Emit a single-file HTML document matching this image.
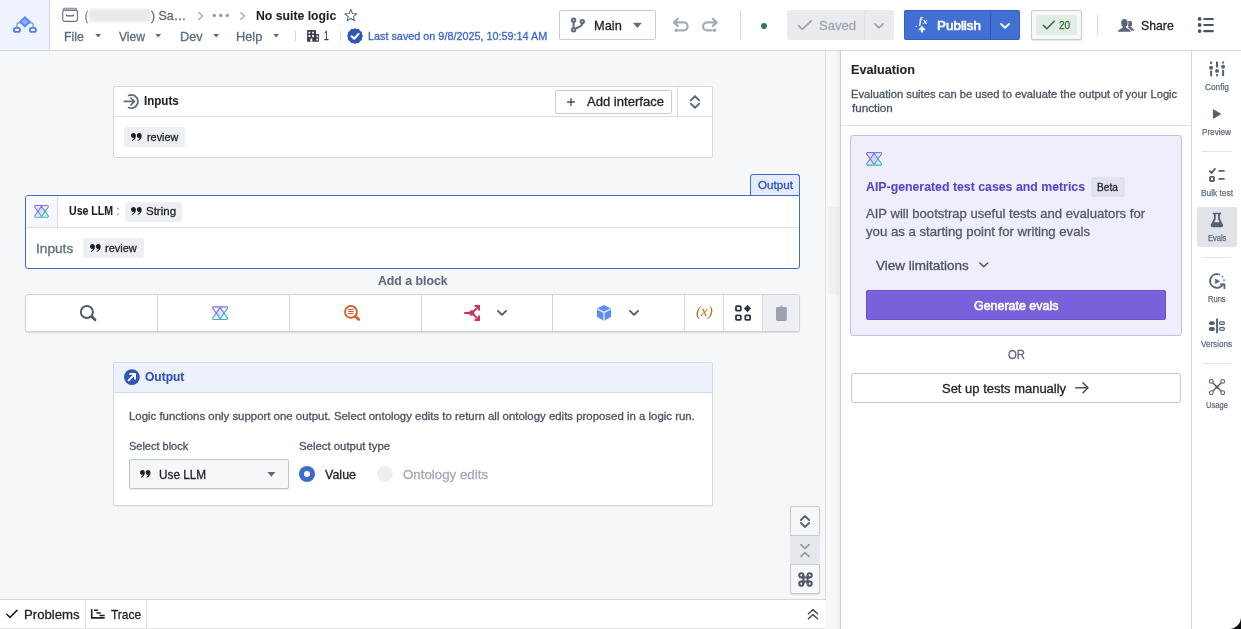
<!DOCTYPE html>
<html lang="en">
<head>
<meta charset="utf-8">
<title>No suite logic</title>
<style>
html,body{margin:0;padding:0}
body{width:1241px;height:629px;overflow:hidden;position:relative;background:#f6f7f9;font-family:"Liberation Sans",sans-serif;color:#1c2127}
div,svg.ic,span.t{position:absolute;box-sizing:border-box}
span.t{-webkit-text-stroke:.3px;white-space:nowrap;line-height:1;transform-origin:0 50%;display:block}
svg.ic{overflow:visible}
</style>
</head>
<body>
<div id="header" style="left:0;top:0;width:1241px;height:51px;background:#fff;border-bottom:1px solid #d3d8de">
<div style="left:0px;top:0px;width:50px;height:50px;background:#eff3fe;border-right:1px solid #cad9fa"></div>
<svg class="ic" style="left:10px;top:12px" width="30" height="24" viewBox="10 12 30 24" ><path d="M16.900 27.500V24.300a1.500 1.500 0 0 1 1.500-1.500h13.200a1.500 1.500 0 0 1 1.500 1.500V27.500" fill="none" stroke="#a5acb8" stroke-width="1.700"/><path d="M24.950 15.900L31.150 21.850 24.950 27.800 18.850 21.850z" fill="#5a8cf1"/><path d="M24.950 18.700L28.250 21.850 24.950 25 21.700 21.850z" fill="#8db2fb"/><rect x="14" y="27.900" width="5.900" height="4" rx="1.700" fill="#f6f9ff" stroke="#4a80ee" stroke-width="1.900"/><rect x="30" y="27.900" width="5.900" height="4" rx="1.700" fill="#f6f9ff" stroke="#4a80ee" stroke-width="1.900"/></svg>
<svg class="ic" style="left:61px;top:7px" width="18" height="16" viewBox="61 7 18 16" ><path d="M63.400 10.300V9.600a1.300 1.300 0 0 1 1.300-1.300h10.600a1.300 1.300 0 0 1 1.300 1.300v.7" stroke="#7d8593" stroke-width="1.100" fill="#c9cdd4"/><rect x="62.700" y="10.300" width="14.800" height="11" rx="1.700" fill="#fff" stroke="#6b7483" stroke-width="1.200"/><path d="M66.400 15c.2 .7 .6 .9 1.200 .9h5c.6 0 1-.2 1.200-.9" stroke="#55627a" stroke-width="1.200" fill="none" stroke-linecap="round"/></svg>
<span class="t" style="left:84.62px;top:8.70px;color:#5f6b7c;font-size:13px;transform:scaleX(0.6765)">(</span>
<div style="left:88.5px;top:9.3px;width:62px;height:13.2px;background:#eaeaeb;border-radius:2px;filter:blur(1px)"></div>
<span class="t" style="left:150.55px;top:8.70px;color:#5f6b7c;font-size:13px;transform:scaleX(0.9512)">) Sa…</span>
<svg class="ic" style="left:197.5px;top:11.5px" width="6" height="8" viewBox="0 0 6 8" ><path d="M.8 .8L4.6 4 .8 7.2" fill="none" stroke="#a0a7b3" stroke-width="1.4" stroke-linecap="round" stroke-linejoin="round"/></svg>
<svg class="ic" style="left:212px;top:13px" width="18" height="5" viewBox="0 0 18 5" ><circle cx="2.3" cy="2.4" r="1.7" fill="#8f99a8"/><circle cx="8.8" cy="2.4" r="1.7" fill="#8f99a8"/><circle cx="15.3" cy="2.4" r="1.7" fill="#8f99a8"/></svg>
<svg class="ic" style="left:239.7px;top:11.5px" width="6" height="8" viewBox="0 0 6 8" ><path d="M.8 .8L4.6 4 .8 7.2" fill="none" stroke="#a0a7b3" stroke-width="1.4" stroke-linecap="round" stroke-linejoin="round"/></svg>
<span class="t" style="left:256.42px;top:8.70px;color:#1c2127;font-size:13px;font-weight:700;-webkit-text-stroke:.1px;transform:scaleX(0.9409)">No suite logic</span>
<svg class="ic" style="left:343px;top:8px" width="16" height="15" viewBox="343 8 16 15" ><polygon points="350.80,9.40 352.42,13.48 356.79,13.75 353.42,16.55 354.50,20.80 350.80,18.45 347.10,20.80 348.18,16.55 344.81,13.75 349.18,13.48" fill="none" stroke="#5f6b7c" stroke-width="1.1" stroke-linejoin="round"/></svg>
<span class="t" style="left:63.73px;top:29.80px;color:#5f6b7c;font-size:13px;transform:scaleX(0.9515)">File</span>
<svg class="ic" style="left:94.8px;top:34.2px" width="6.4" height="3.6" viewBox="0 0 6.4 3.6" ><path d="M.3 0h5.8L3.2 3.5z" fill="#5f6b7c"/></svg>
<span class="t" style="left:118.72px;top:29.80px;color:#5f6b7c;font-size:13px;transform:scaleX(0.9314)">View</span>
<svg class="ic" style="left:155.3px;top:34.2px" width="6.4" height="3.6" viewBox="0 0 6.4 3.6" ><path d="M.3 0h5.8L3.2 3.5z" fill="#5f6b7c"/></svg>
<span class="t" style="left:179.72px;top:29.80px;color:#5f6b7c;font-size:13px;transform:scaleX(0.9799)">Dev</span>
<svg class="ic" style="left:213px;top:34.2px" width="6.4" height="3.6" viewBox="0 0 6.4 3.6" ><path d="M.3 0h5.8L3.2 3.5z" fill="#5f6b7c"/></svg>
<span class="t" style="left:235.69px;top:29.80px;color:#5f6b7c;font-size:13px;transform:scaleX(0.9853)">Help</span>
<svg class="ic" style="left:273px;top:34.2px" width="6.4" height="3.6" viewBox="0 0 6.4 3.6" ><path d="M.3 0h5.8L3.2 3.5z" fill="#5f6b7c"/></svg>
<div style="left:295px;top:31px;width:1px;height:10px;background:#d3d8de"></div>
<svg class="ic" style="left:307px;top:30px" width="12" height="12" viewBox="307 30 12 12" ><path d="M307.100 30.700a.6.600 0 0 1 .6-.6h7.700a.6.600 0 0 1 .6 .6v3.300h2.300a.6.600 0 0 1 .6 .6v7.200h-11.800z" fill="#383e4a"/><path d="M308.500 31.800h1.800v1.800h-1.800zM312.100 31.800h1.800v1.800h-1.800zM308.500 35.100h1.800v1.800h-1.800zM312.100 35.100h1.800v1.800h-1.800zM310.400 38.600h1.900v3.200h-1.900zM316.500 35.600h1.500v1.700h-1.500zM316.500 38.700h1.500v1.700h-1.500z" fill="#fff"/></svg>
<span class="t" style="left:324.17px;top:30.20px;color:#383e4a;font-size:12px;transform:scaleX(0.7071)">1</span>
<div style="left:340px;top:31px;width:1px;height:10px;background:#d3d8de"></div>
<svg class="ic" style="left:346px;top:27px" width="18" height="18" viewBox="346 27 18 18" ><polygon points="362.90,36.05 362.82,36.46 362.62,36.85 362.35,37.21 362.11,37.56 361.95,37.91 361.91,38.30 361.95,38.72 362.00,39.16 361.98,39.61 361.84,40.00 361.57,40.32 361.20,40.55 360.78,40.73 360.40,40.91 360.09,41.14 359.86,41.45 359.68,41.83 359.50,42.25 359.27,42.62 358.95,42.89 358.56,43.03 358.11,43.05 357.67,43.00 357.25,42.96 356.86,43.00 356.51,43.16 356.16,43.40 355.80,43.67 355.41,43.87 355.00,43.95 354.59,43.87 354.20,43.67 353.84,43.40 353.49,43.16 353.14,43.00 352.75,42.96 352.33,43.00 351.89,43.05 351.44,43.03 351.05,42.89 350.73,42.62 350.50,42.25 350.32,41.83 350.14,41.45 349.91,41.14 349.60,40.91 349.22,40.73 348.80,40.55 348.43,40.32 348.16,40.00 348.02,39.61 348.00,39.16 348.05,38.72 348.09,38.30 348.05,37.91 347.89,37.56 347.65,37.21 347.38,36.85 347.18,36.46 347.10,36.05 347.18,35.64 347.38,35.25 347.65,34.89 347.89,34.54 348.05,34.19 348.09,33.80 348.05,33.38 348.00,32.94 348.02,32.49 348.16,32.10 348.43,31.78 348.80,31.55 349.22,31.37 349.60,31.19 349.91,30.96 350.14,30.65 350.32,30.27 350.50,29.85 350.73,29.48 351.05,29.21 351.44,29.07 351.89,29.05 352.33,29.10 352.75,29.14 353.14,29.10 353.49,28.94 353.84,28.70 354.20,28.43 354.59,28.23 355.00,28.15 355.41,28.23 355.80,28.43 356.16,28.70 356.51,28.94 356.86,29.10 357.25,29.14 357.67,29.10 358.11,29.05 358.56,29.07 358.95,29.21 359.27,29.48 359.50,29.85 359.68,30.27 359.86,30.65 360.09,30.96 360.40,31.19 360.78,31.37 361.20,31.55 361.57,31.78 361.84,32.10 361.98,32.49 362.00,32.94 361.95,33.38 361.91,33.80 361.95,34.19 362.11,34.54 362.35,34.89 362.62,35.25 362.82,35.64" fill="#3057b6"/><path d="M351.600 36.300l2.500 2.400 4.500-4.800" fill="none" stroke="#fff" stroke-width="2.100" stroke-linecap="round" stroke-linejoin="round"/></svg>
<span class="t" style="left:367.77px;top:31.30px;color:#3a65cb;font-size:11.2px;transform:scaleX(0.9670)">Last saved on 9/8/2025, 10:59:14 AM</span>
<div style="left:559px;top:10px;width:97px;height:30px;border:1px solid #c9ccd2;border-radius:2px;background:#fff"></div>
<svg class="ic" style="left:569px;top:16px" width="18" height="18" viewBox="569 16 18 18" ><g fill="none" stroke="#5f6b7c" stroke-width="2"><circle cx="573.6" cy="20.2" r="1.700"/><circle cx="573.6" cy="29.8" r="1.700"/><circle cx="582.3" cy="21.600" r="1.700"/><path d="M573.6 22.2v5.6M582.3 23.6c0 3-3 3.2-6.6 4.6"/></g></svg>
<span class="t" style="left:593.59px;top:19.00px;color:#1c2127;font-size:13px;transform:scaleX(0.9847)">Main</span>
<svg class="ic" style="left:632.5px;top:23.3px" width="8.8" height="4.8" viewBox="0 0 8.8 4.8" ><path d="M.4 0h8L4.4 4.7z" fill="#5f6b7c" stroke="#5f6b7c" stroke-width=".4" stroke-linejoin="round"/></svg>
<svg class="ic" style="left:672px;top:17px" width="18" height="16" viewBox="672 17 18 16" ><g fill="none" stroke="#a3a9b5" stroke-width="2.200" stroke-linecap="round" stroke-linejoin="round"><path d="M677.8 18.8L674 22.4l3.8 3.6"/><path d="M674.4 22.4h9.2a4 4 0 0 1 0 8h-4.4"/></g><circle cx="676.3" cy="30.3" r="1.750" fill="#a3a9b5"/></svg>
<svg class="ic" style="left:701px;top:17px" width="18" height="16" viewBox="701 17 18 16" ><g fill="none" stroke="#a3a9b5" stroke-width="2.200" stroke-linecap="round" stroke-linejoin="round"><path d="M712.9 18.8l3.8 3.6-3.8 3.6"/><path d="M716.3 22.4h-9.2a4 4 0 0 0 0 8h4.4"/></g><circle cx="714.4" cy="30.3" r="1.750" fill="#a3a9b5"/></svg>
<div style="left:740px;top:10px;width:1px;height:30px;background:#d3d8de"></div>
<div style="left:760.5px;top:22.5px;width:6.6px;height:6.6px;background:#2f7d46;border-radius:50%"></div>
<div style="left:787px;top:10px;width:107px;height:30px;background:#e9ebef;border-radius:2px"></div>
<div style="left:864px;top:10px;width:1px;height:30px;background:#dcdfe6"></div>
<svg class="ic" style="left:797px;top:19px" width="16" height="12" viewBox="797 19 16 12" ><path d="M798.6 25.6l3.8 3.8 8.8-8.6" fill="none" stroke="#9ea5b1" stroke-width="1.800" stroke-linecap="round" stroke-linejoin="round"/></svg>
<span class="t" style="left:818.83px;top:19.00px;color:#9ea4b0;font-size:13px;transform:scaleX(1.0073)">Saved</span>
<svg class="ic" style="left:873.7px;top:22.5px" width="10" height="5.8" viewBox="0 0 10 5.8" ><path d="M.9 .9L5 4.8 9.1 .9" fill="none" stroke="#9ea5b1" stroke-width="1.8" stroke-linecap="round" stroke-linejoin="round"/></svg>
<div style="left:904px;top:10px;width:116px;height:30px;background:#416fd3;border-radius:2px;box-shadow:inset 0 0 0 1px rgba(30,60,150,.3)"></div>
<div style="left:990px;top:10px;width:1px;height:30px;background:#3156b4"></div>
<svg class="ic" style="left:914px;top:17px" width="16" height="17" viewBox="914 17 16 17" ><path d="M922 32.400v-4.400" fill="none" stroke="#fff" stroke-width="2.300"/><path d="M918.700 29.800l3.300-3.700 3.300 3.700z" fill="#fff" stroke="#fff" stroke-width=".5" stroke-linejoin="round"/><circle cx="916.300" cy="26.400" r=".65" fill="#fff"/></svg>
<span class="t" style="left:918.80px;top:15.40px;color:#fff;font-size:11px;font-family:'Liberation Serif',serif;font-style:italic;font-weight:700;-webkit-text-stroke:.1px;transform:scaleX(0.8715)">f</span>
<span class="t" style="left:923.40px;top:17.30px;color:#fff;font-size:9px;-webkit-text-stroke:.25px;font-family:'Liberation Serif',serif;font-style:italic;font-weight:700;-webkit-text-stroke:.1px;transform:scaleX(0.9778)">x</span>
<span class="t" style="left:937.24px;top:18.70px;color:#fff;font-size:13px;-webkit-text-stroke:.65px;transform:scaleX(1.0327)">Publish</span>
<svg class="ic" style="left:1000px;top:22.5px" width="10" height="5.8" viewBox="0 0 10 5.8" ><path d="M.9 .9L5 4.8 9.1 .9" fill="none" stroke="#fff" stroke-width="1.9" stroke-linecap="round" stroke-linejoin="round"/></svg>
<div style="left:1031px;top:10px;width:51px;height:30px;background:#f6f7f9;border:1px solid #c5cbd3;border-radius:2px;box-shadow:0 1px 1px rgba(17,20,24,.1)"></div>
<div style="left:1036px;top:15px;width:41px;height:20px;background:#e3ebe5;border-radius:2px"></div>
<svg class="ic" style="left:1042px;top:19px" width="14" height="12" viewBox="1042 19 14 12" ><path d="M1043.4 25.4l3.4 3.4 7.4-7.6" fill="none" stroke="#2b7340" stroke-width="1.6" stroke-linecap="round" stroke-linejoin="round"/></svg>
<span class="t" style="left:1059.19px;top:19.40px;color:#2b7340;font-size:11.6px;transform:scaleX(0.8717)">20</span>
<div style="left:1097px;top:15px;width:1px;height:20px;background:#d3d8de"></div>
<svg class="ic" style="left:1117px;top:19px" width="18" height="13" viewBox="1117 19 18 13" ><g fill="#5c6576"><ellipse cx="1129.700" cy="23.700" rx="2.300" ry="2.900"/><path d="M1128.300 26.400h2.600c.4 1.500 2.900 2.300 3.300 4.300h-6.500z"/></g><g fill="#fff" stroke="#fff" stroke-width="1.700" stroke-linejoin="round"><ellipse cx="1124.400" cy="22.900" rx="3.200" ry="3.900"/><path d="M1118 31.700c.3-2.600 3.600-3 4.800-4.300v-1.500h3.200v1.500c1.200 1.300 4.500 1.700 4.800 4.300z"/></g><g fill="#5c6576"><ellipse cx="1124.400" cy="22.900" rx="3.250" ry="3.950"/><path d="M1117.900 31.800c.3-2.700 3.600-3.100 4.900-4.400v-1.800h3.200v1.800c1.300 1.300 4.600 1.700 4.900 4.400z"/></g></svg>
<span class="t" style="left:1141.44px;top:19.00px;color:#1c2127;font-size:13px;transform:scaleX(0.9432)">Share</span>
<svg class="ic" style="left:1197px;top:16px" width="18" height="18" viewBox="1197 16 18 18" ><g fill="#4a5264"><circle cx="1199.600" cy="18.9" r="1.900"/><circle cx="1199.600" cy="25" r="1.900"/><circle cx="1199.600" cy="31.1" r="1.900"/><rect x="1203.200" y="17.900" width="10.6" height="2.100" rx="1"/><rect x="1203.200" y="24" width="10.6" height="2.100" rx="1"/><rect x="1203.200" y="30.100" width="10.6" height="2.100" rx="1"/></g></svg>
</div>
<div id="canvas" style="left:0;top:51px;width:826px;height:549px;background:#f6f7f9;border-right:1px solid #dde0e6"></div>
<div style="left:826px;top:51px;width:15px;height:578px;background:#f6f7f9"></div>
<div style="left:828px;top:207px;width:11px;height:87px;background:#eff0f2"></div>
<div style="left:835px;top:51px;width:5px;height:578px;background:linear-gradient(90deg,rgba(0,0,0,0),rgba(60,70,90,.06))"></div>
<div style="left:840px;top:51px;width:1px;height:578px;background:#cbcdd1"></div>
<div id="inputs-card" style="left:113px;top:86px;width:600px;height:72px;background:#fff;border:1px solid #d8d9dc;border-radius:2px"></div>
<div style="left:114px;top:116px;width:598px;height:1px;background:#dbdcdf"></div>
<svg class="ic" style="left:123px;top:93px" width="17" height="16" viewBox="123 93 17 16" ><g fill="none" stroke="#5f6b7c" stroke-width="1.700" stroke-linecap="round" stroke-linejoin="round"><path d="M128.600 95.500a6.600 6.600 0 1 1 0 12"/><path d="M124.400 101.400h9.600M130.900 98l3.600 3.400-3.600 3.400"/></g></svg>
<span class="t" style="left:144.25px;top:94.00px;color:#1c2127;font-size:13px;font-weight:700;-webkit-text-stroke:.1px;transform:scaleX(0.8913)">Inputs</span>
<div style="left:555px;top:90px;width:117px;height:24px;border:1px solid #c9ccd2;border-radius:2px;background:#fff"></div>
<svg class="ic" style="left:567px;top:98px" width="8" height="8" viewBox="0 0 8 8" ><path d="M4 .600v6.800M.600 4h6.800" stroke="#4a5264" stroke-width="1.400" stroke-linecap="round"/></svg>
<span class="t" style="left:586.94px;top:94.80px;color:#1c2127;font-size:13px;transform:scaleX(1.0047)">Add interface</span>
<div style="left:677px;top:87px;width:1px;height:29px;background:#dbdcdf"></div>
<svg class="ic" style="left:689px;top:94px" width="12" height="16" viewBox="0 0 12 16" ><path d="M1.800 6.400L6 2.300l4.200 4.100M1.800 9.600L6 13.700l4.200-4.100" fill="none" stroke="#5a6578" stroke-width="1.900" stroke-linecap="round" stroke-linejoin="round"/></svg>
<div style="left:124px;top:127px;width:61px;height:20px;background:#edeff2;border-radius:3px"></div>
<svg class="ic" style="left:130.5px;top:132.6px" width="10.8" height="8" viewBox="0 0 11 8" ><path d="M2.6 0C1.1 0 0 1.100 0 2.500 0 3.900 1 4.900 2.300 4.900c.3 0 .5 0 .7-.100C2.700 6 1.900 6.900.700 7.400L1.100 8C3.600 7.200 5 5.200 5 2.800 5 1.100 4 0 2.600 0zM8.500 0C7 0 5.900 1.100 5.900 2.500c0 1.400 1 2.400 2.300 2.400.3 0 .5 0 .7-.100-.3 1.200-1.100 2.100-2.300 2.600L7 8c2.500-.8 3.900-2.800 3.900-5.200C10.900 1.100 9.900 0 8.500 0z" fill="#1c2127"/></svg>
<span class="t" style="left:146.72px;top:130.80px;color:#1c2127;font-size:11.6px;transform:scaleX(0.9348)">review</span>
<div style="left:750px;top:174px;width:50px;height:22px;background:#e6ebf9;border:1px solid #3f6bd1;border-bottom:none;border-radius:3px 3px 0 0"></div>
<span class="t" style="left:757.68px;top:180.20px;color:#2d52b5;font-size:11.4px;transform:scaleX(1.0198)">Output</span>
<div id="llm-block" style="left:25px;top:195px;width:775px;height:74px;background:#fff;border:1px solid #3f6bd1;border-radius:3px 0 3px 3px"></div>
<div style="left:26px;top:196px;width:32px;height:31px;background:#f8f7ff;border-right:1px solid #ddd8fb;border-radius:2px 0 0 0"></div>
<div style="left:26px;top:227px;width:773px;height:1px;background:#dbdcdf"></div>
<svg class="ic" style="left:34.4px;top:205.2px" width="15" height="12.8" viewBox="0 0 16.2 13.8" ><defs><linearGradient id="ga" x1="0" y1="0" x2=".7" y2="1"><stop offset="0" stop-color="#8a5ff2"/><stop offset=".5" stop-color="#6f86ea"/><stop offset="1" stop-color="#2fc4b0"/></linearGradient></defs><path d="M1.200 .600h13.800L8.100 13.200zM1.200 13.200h13.800L8.100 .600z" fill="rgba(150,150,240,.10)" stroke="none"/><path d="M8.100 1.200L4.300 6.900 8.100 12.600 11.900 6.900z" fill="rgba(130,145,240,.26)"/><g fill="none" stroke="url(#ga)" stroke-width="1.150" stroke-linejoin="round" stroke-linecap="round"><path d="M1.600 .600h13a1 1 0 0 1 .8 1.500L11.900 6.900 15.400 11.700a1 1 0 0 1-.8 1.500h-13a1 1 0 0 1-.8-1.500L4.300 6.900 .800 2.100A1 1 0 0 1 1.600 .600z"/><path d="M8.100 1.200L4.300 6.900 8.100 12.600 11.900 6.900z"/></g></svg>
<span class="t" style="left:68.57px;top:204.00px;color:#1c2127;font-size:13px;font-weight:700;-webkit-text-stroke:.1px;transform:scaleX(0.8143)">Use LLM</span>
<span class="t" style="left:116.00px;top:204.00px;color:#98a1b0;font-size:13px;transform:scaleX(0.9931)">:</span>
<div style="left:125px;top:202px;width:57px;height:20px;background:#edeff2;border-radius:3px"></div>
<svg class="ic" style="left:131.3px;top:207.4px" width="10.8" height="8" viewBox="0 0 11 8" ><path d="M2.6 0C1.1 0 0 1.100 0 2.500 0 3.900 1 4.900 2.300 4.900c.3 0 .5 0 .7-.100C2.700 6 1.900 6.900.700 7.400L1.100 8C3.600 7.200 5 5.200 5 2.800 5 1.100 4 0 2.600 0zM8.500 0C7 0 5.900 1.100 5.900 2.500c0 1.400 1 2.400 2.300 2.400.3 0 .5 0 .7-.100-.3 1.200-1.100 2.100-2.300 2.600L7 8c2.500-.8 3.900-2.800 3.900-5.200C10.900 1.100 9.900 0 8.500 0z" fill="#1c2127"/></svg>
<span class="t" style="left:146.27px;top:205.30px;color:#1c2127;font-size:11.6px;transform:scaleX(0.9911)">String</span>
<span class="t" style="left:35.87px;top:241.80px;color:#5f6b7c;font-size:13px;transform:scaleX(1.0507)">Inputs</span>
<div style="left:83px;top:238px;width:61px;height:20px;background:#edeff2;border-radius:3px"></div>
<svg class="ic" style="left:89.5px;top:243.6px" width="10.8" height="8" viewBox="0 0 11 8" ><path d="M2.6 0C1.1 0 0 1.100 0 2.500 0 3.900 1 4.900 2.300 4.900c.3 0 .5 0 .7-.100C2.700 6 1.900 6.900.700 7.400L1.100 8C3.600 7.200 5 5.200 5 2.800 5 1.100 4 0 2.600 0zM8.500 0C7 0 5.900 1.100 5.900 2.500c0 1.400 1 2.400 2.300 2.400.3 0 .5 0 .7-.100-.3 1.200-1.100 2.100-2.300 2.600L7 8c2.500-.8 3.900-2.800 3.900-5.200C10.900 1.100 9.900 0 8.500 0z" fill="#1c2127"/></svg>
<span class="t" style="left:105.21px;top:241.80px;color:#1c2127;font-size:11.6px;transform:scaleX(0.9467)">review</span>
<span class="t" style="left:377.71px;top:273.50px;color:#5f6b7c;font-size:13px;font-weight:700;-webkit-text-stroke:.1px;transform:scaleX(0.9442)">Add a block</span>
<div id="add-bar" style="left:25px;top:294px;width:775px;height:38px;background:#fff;border:1px solid #d0d4da;border-radius:3px;box-shadow:0 1px 1px rgba(17,20,24,.12)"></div>
<div style="left:157px;top:295px;width:1px;height:36px;background:#d3d6db"></div>
<div style="left:289px;top:295px;width:1px;height:36px;background:#d3d6db"></div>
<div style="left:421px;top:295px;width:1px;height:36px;background:#d3d6db"></div>
<div style="left:552px;top:295px;width:1px;height:36px;background:#d3d6db"></div>
<div style="left:684px;top:295px;width:1px;height:36px;background:#d3d6db"></div>
<div style="left:723px;top:295px;width:1px;height:36px;background:#d3d6db"></div>
<div style="left:762px;top:295px;width:37px;height:36px;background:#edeff2;border-left:1px solid #d8dbe0;border-radius:0 2px 2px 0"></div>
<svg class="ic" style="left:79px;top:304px" width="18" height="18" viewBox="79 304 18 18" ><circle cx="86.900" cy="312" r="6.050" fill="none" stroke="#4f596b" stroke-width="1.900"/><path d="M91.700 316.600l3.300 3.200" stroke="#4f596b" stroke-width="2.800" stroke-linecap="round"/></svg>
<svg class="ic" style="left:211.7px;top:305.7px" width="16.3" height="14.3" viewBox="0 0 16.2 13.8" ><defs><linearGradient id="gb" x1="0" y1="0" x2=".7" y2="1"><stop offset="0" stop-color="#8a5ff2"/><stop offset=".5" stop-color="#6f86ea"/><stop offset="1" stop-color="#2fc4b0"/></linearGradient></defs><path d="M1.200 .600h13.800L8.100 13.200zM1.200 13.200h13.800L8.100 .600z" fill="rgba(150,150,240,.10)" stroke="none"/><path d="M8.100 1.200L4.300 6.900 8.100 12.600 11.900 6.900z" fill="rgba(130,145,240,.26)"/><g fill="none" stroke="url(#gb)" stroke-width="1.150" stroke-linejoin="round" stroke-linecap="round"><path d="M1.600 .600h13a1 1 0 0 1 .8 1.500L11.900 6.900 15.400 11.700a1 1 0 0 1-.8 1.500h-13a1 1 0 0 1-.8-1.500L4.300 6.900 .800 2.100A1 1 0 0 1 1.600 .600z"/><path d="M8.100 1.200L4.300 6.900 8.100 12.600 11.900 6.900z"/></g></svg>
<svg class="ic" style="left:343px;top:304px" width="18" height="18" viewBox="343 304 18 18" ><circle cx="350.950" cy="311.900" r="5.900" fill="none" stroke="#d9602f" stroke-width="1.900"/><path d="M355.500 316.400l3.200 3.200" stroke="#d9602f" stroke-width="2.800" stroke-linecap="round"/><path d="M348 309.500h5.600M348 311.500h5.600M348 313.500h5.600" stroke="#d9602f" stroke-width="1"/></svg>
<svg class="ic" style="left:463px;top:304px" width="18" height="18" viewBox="463 304 18 18" ><g fill="none" stroke="#cd3564" stroke-width="2" stroke-linejoin="miter"><path d="M464.200 313h7"/><path d="M471.900 313l6.400-6.400M471.900 313l6.400 6.400"/><path d="M474.600 306h4.400v4.400M474.600 320h4.400v-4.400"/></g><circle cx="471.700" cy="313" r="2.700" fill="#cd3564"/></svg>
<svg class="ic" style="left:497px;top:310px" width="10" height="5.8" viewBox="0 0 10 5.8" ><path d="M.9 .9L5 4.8 9.1 .9" fill="none" stroke="#4a5264" stroke-width="1.8" stroke-linecap="round" stroke-linejoin="round"/></svg>
<svg class="ic" style="left:596px;top:304px" width="16" height="18" viewBox="596 304 16 18" ><path d="M604 305l7 3.600v8.400l-7 3.800-7-3.800v-8.400z" fill="#5b8df2"/><path d="M597.300 308.900l6.700 3.500 6.700-3.500M604 312.400v8" fill="none" stroke="#e3ecfe" stroke-width="1.400"/></svg>
<svg class="ic" style="left:628.7px;top:310px" width="10" height="5.8" viewBox="0 0 10 5.8" ><path d="M.9 .9L5 4.8 9.1 .9" fill="none" stroke="#4a5264" stroke-width="1.8" stroke-linecap="round" stroke-linejoin="round"/></svg>
<span class="t" style="left:695.93px;top:304.00px;color:#b86e14;font-size:14.5px;-webkit-text-stroke:0;font-family:'Liberation Serif',serif;font-style:italic;transform:scaleX(1.0508)">(x)</span>
<svg class="ic" style="left:734px;top:304px" width="18" height="18" viewBox="734 304 18 18" ><g fill="none" stroke="#2f343f" stroke-width="1.800"><rect x="736" y="306.200" width="4.800" height="4.500" rx=".8"/><rect x="736" y="315.300" width="4.800" height="4.500" rx=".8"/><rect x="745.300" y="315.300" width="4.800" height="4.500" rx=".8"/></g><path d="M747.500 304.800l3.600 3.750-3.600 3.750-3.600-3.750z" fill="#2f343f"/></svg>
<svg class="ic" style="left:775px;top:304px" width="13" height="18" viewBox="775 304 13 18" ><rect x="776" y="306.900" width="10.800" height="14" rx="1.300" fill="#9ba1ae"/><path d="M779 307.200l2.400-2.300 2.400 2.300z" fill="#b4b9c3"/></svg>
<div id="output-card" style="left:113px;top:362px;width:600px;height:144px;background:#fff;border:1px solid #d8d9dc;border-radius:2px;box-shadow:0 1px 1px rgba(17,20,24,.06)"></div>
<div style="left:114px;top:363px;width:598px;height:30px;background:#edf1fb;border-bottom:1px solid #d3d9e6;border-radius:2px 2px 0 0"></div>
<svg class="ic" style="left:123px;top:368px" width="18" height="18" viewBox="123 368 18 18" ><circle cx="131.900" cy="377.100" r="7.900" fill="#3158b5"/><path d="M128.600 380.400l6-6M130.200 373.900h4.800v4.800" fill="none" stroke="#fff" stroke-width="1.900" stroke-linecap="round" stroke-linejoin="round"/></svg>
<span class="t" style="left:144.56px;top:370.20px;color:#2d52b5;font-size:13px;font-weight:700;-webkit-text-stroke:.1px;transform:scaleX(0.9242)">Output</span>
<span class="t" style="left:128.87px;top:411.00px;color:#4a5264;font-size:11.2px;transform:scaleX(1.0199)">Logic functions only support one output. Select ontology edits to return all ontology edits proposed in a logic run.</span>
<span class="t" style="left:129.08px;top:441.00px;color:#4a5264;font-size:11.2px;transform:scaleX(0.9810)">Select block</span>
<span class="t" style="left:298.94px;top:441.00px;color:#4a5264;font-size:11.2px;transform:scaleX(1.0167)">Select output type</span>
<div style="left:129px;top:459px;width:160px;height:30px;background:#f6f7f9;border:1px solid #bfc5cd;border-radius:2px;box-shadow:0 1px 1px rgba(17,20,24,.1)"></div>
<svg class="ic" style="left:139.7px;top:469.8px" width="10.6" height="7.7" viewBox="0 0 11 8" ><path d="M2.6 0C1.1 0 0 1.100 0 2.500 0 3.900 1 4.900 2.300 4.900c.3 0 .5 0 .7-.100C2.700 6 1.900 6.900.700 7.400L1.100 8C3.600 7.200 5 5.200 5 2.800 5 1.100 4 0 2.600 0zM8.500 0C7 0 5.900 1.100 5.900 2.500c0 1.400 1 2.400 2.300 2.400.3 0 .5 0 .7-.100-.3 1.200-1.100 2.100-2.300 2.600L7 8c2.500-.8 3.900-2.800 3.900-5.200C10.900 1.100 9.900 0 8.500 0z" fill="#1c2127"/></svg>
<span class="t" style="left:158.57px;top:467.70px;color:#1c2127;font-size:13px;transform:scaleX(0.9063)">Use LLM</span>
<svg class="ic" style="left:266.5px;top:471.6px" width="8.8" height="5" viewBox="0 0 8.800 5" ><path d="M.400 0h8L4.400 4.800z" fill="#5f6b7c"/></svg>
<div style="left:298.8px;top:465.8px;width:16.2px;height:16.2px;background:#3f6bd1;border-radius:50%"></div>
<div style="left:303.8px;top:470.8px;width:6.2px;height:6.2px;background:#fff;border-radius:50%"></div>
<span class="t" style="left:324.70px;top:467.70px;color:#1c2127;font-size:13px;transform:scaleX(0.9619)">Value</span>
<div style="left:376.7px;top:465.8px;width:16.2px;height:16.2px;background:#edeff2;border-radius:50%"></div>
<span class="t" style="left:402.82px;top:467.70px;color:#a3a9b5;font-size:13px;transform:scaleX(1.0236)">Ontology edits</span>
<div style="left:790px;top:506px;width:30px;height:30px;background:#f6f7f9;border:1px solid #c5cbd3;border-radius:2px 2px 0 0;box-shadow:0 1px 1px rgba(17,20,24,.1)"></div>
<div style="left:790px;top:536px;width:30px;height:28px;background:#e5e8ec"></div>
<div style="left:790px;top:564px;width:30px;height:30px;background:#f6f7f9;border:1px solid #c5cbd3;border-radius:0 0 2px 2px;box-shadow:0 1px 1px rgba(17,20,24,.1)"></div>
<svg class="ic" style="left:799px;top:513.5px" width="12" height="15" viewBox="0 0 12 15" ><path d="M1.900 6L6 2l4.100 4M1.900 9L6 13l4.100-4" fill="none" stroke="#5a6578" stroke-width="1.900" stroke-linecap="round" stroke-linejoin="round"/></svg>
<svg class="ic" style="left:799px;top:542.5px" width="12" height="15" viewBox="0 0 12 15" ><path d="M2 1.600L6 5.300l4-3.700M2 13.400L6 9.700l4 3.700" fill="none" stroke="#9299a6" stroke-width="1.800" stroke-linecap="round" stroke-linejoin="round"/></svg>
<svg class="ic" style="left:797.5px;top:571.5px" width="15" height="15" viewBox="0 0 15 15" ><g fill="none" stroke="#4f596c" stroke-width="2"><circle cx="3.300" cy="3.300" r="2.100"/><circle cx="11.700" cy="3.300" r="2.100"/><circle cx="3.300" cy="11.700" r="2.100"/><circle cx="11.700" cy="11.700" r="2.100"/><path d="M5.400 1.200v12.600M9.600 1.200v12.600M1.200 5.400h12.600M1.200 9.600h12.600" stroke-width="0"/><rect x="5.400" y="5.400" width="4.200" height="4.200"/><path d="M5.400 3.300v2.100H3.300M9.600 3.300v2.100h2.100M5.400 11.700V9.600H3.300M9.600 11.700V9.600h2.100"/></g></svg>
<div id="bottom-bar" style="left:0;top:599px;width:826px;height:30px;background:#fff;border-top:1px solid #d3d8de;border-bottom:1px solid #e3e5e9"></div>
<svg class="ic" style="left:5px;top:609px" width="14" height="10" viewBox="5 609 14 10" ><path d="M6.800 614.200l3.200 3.200 7-7" fill="none" stroke="#1c2127" stroke-width="1.500" stroke-linecap="round" stroke-linejoin="round"/></svg>
<span class="t" style="left:24.14px;top:607.70px;color:#1c2127;font-size:13px;transform:scaleX(1.0136)">Problems</span>
<div style="left:85px;top:600px;width:1px;height:28px;background:#dfe2e7"></div>
<svg class="ic" style="left:90px;top:608px" width="16" height="12" viewBox="90 608 16 12" ><path d="M91.700 609.300v8.600h13" fill="none" stroke="#1c2127" stroke-width="1.600"/><path d="M94 610.200h4M96.400 612.900h4.400M99.400 615.600h5.300" stroke="#1c2127" stroke-width="1.500"/></svg>
<span class="t" style="left:111.04px;top:607.60px;color:#1c2127;font-size:13px;transform:scaleX(0.9204)">Trace</span>
<div style="left:146px;top:600px;width:1px;height:28px;background:#dfe2e7"></div>
<svg class="ic" style="left:807px;top:607.5px" width="12" height="12" viewBox="0 0 12 12" ><path d="M1.400 5.800L6 1.600l4.600 4.200M1.400 10.800L6 6.600l4.600 4.200" fill="none" stroke="#4a5264" stroke-width="1.500" stroke-linecap="round" stroke-linejoin="round"/></svg>
<div id="panel" style="left:841px;top:51px;width:351px;height:578px;background:#fff;border-right:1px solid #d3d8de"></div>
<span class="t" style="left:851.29px;top:63.20px;color:#1c2127;font-size:13px;font-weight:700;-webkit-text-stroke:.1px;transform:scaleX(0.9713)">Evaluation</span>
<span class="t" style="left:850.82px;top:88.80px;color:#4a5264;font-size:11.2px;transform:scaleX(0.9989)">Evaluation suites can be used to evaluate the output of your Logic</span>
<span class="t" style="left:851.94px;top:102.70px;color:#4a5264;font-size:11.2px;transform:scaleX(1.0409)">function</span>
<div style="left:841px;top:125px;width:350px;height:1px;background:#dfe2e7"></div>
<div id="aip-card" style="left:850px;top:135px;width:332px;height:201px;background:#f0eefb;border:1px solid #c4bbf5;border-radius:3px"></div>
<svg class="ic" style="left:865.8px;top:152px" width="16.2" height="13.8" viewBox="0 0 16.2 13.8" ><defs><linearGradient id="gc" x1="0" y1="0" x2=".7" y2="1"><stop offset="0" stop-color="#8a5ff2"/><stop offset=".5" stop-color="#6f86ea"/><stop offset="1" stop-color="#2fc4b0"/></linearGradient></defs><path d="M1.200 .600h13.800L8.100 13.200zM1.200 13.200h13.800L8.100 .600z" fill="rgba(150,150,240,.10)" stroke="none"/><path d="M8.100 1.200L4.300 6.900 8.100 12.600 11.900 6.900z" fill="rgba(130,145,240,.26)"/><g fill="none" stroke="url(#gc)" stroke-width="1.150" stroke-linejoin="round" stroke-linecap="round"><path d="M1.600 .600h13a1 1 0 0 1 .8 1.500L11.900 6.900 15.400 11.700a1 1 0 0 1-.8 1.500h-13a1 1 0 0 1-.8-1.500L4.300 6.900 .800 2.100A1 1 0 0 1 1.600 .600z"/><path d="M8.100 1.200L4.300 6.900 8.100 12.600 11.900 6.900z"/></g></svg>
<span class="t" style="left:866.27px;top:179.80px;color:#5a45c7;font-size:13px;font-weight:700;-webkit-text-stroke:.1px;transform:scaleX(0.9473)">AIP-generated test cases and metrics</span>
<div style="left:1091px;top:177px;width:34px;height:20px;background:#e2e1ee;border-radius:3px"></div>
<span class="t" style="left:1096.99px;top:181.80px;color:#1c2127;font-size:11.2px;transform:scaleX(0.9075)">Beta</span>
<span class="t" style="left:866.04px;top:206.80px;color:#505a6e;font-size:13px;transform:scaleX(1.0065)">AIP will bootstrap useful tests and evaluators for</span>
<span class="t" style="left:866.04px;top:224.80px;color:#505a6e;font-size:13px;transform:scaleX(1.0133)">you as a starting point for writing evals</span>
<span class="t" style="left:876.03px;top:258.70px;color:#4a5264;font-size:13px;transform:scaleX(1.0379)">View limitations</span>
<svg class="ic" style="left:978.9px;top:262.4px" width="9.6" height="5.8" viewBox="0 0 10 5.8" ><path d="M.9 .9L5 4.8 9.1 .9" fill="none" stroke="#4a5264" stroke-width="1.6" stroke-linecap="round" stroke-linejoin="round"/></svg>
<div style="left:866px;top:290px;width:300px;height:30px;background:#7961db;border-radius:2px;box-shadow:inset 0 0 0 1px rgba(60,40,160,.25)"></div>
<span class="t" style="left:974.18px;top:298.80px;color:#fff;font-size:13px;-webkit-text-stroke:.65px;transform:scaleX(0.9575)">Generate evals</span>
<span class="t" style="left:1007.80px;top:348.00px;color:#5f6b7c;font-size:13px;transform:scaleX(0.8739)">OR</span>
<div style="left:851px;top:373px;width:330px;height:30px;background:#fff;border:1px solid #c5cbd3;border-radius:2px"></div>
<span class="t" style="left:942.11px;top:381.90px;color:#1c2127;font-size:13px;transform:scaleX(0.9983)">Set up tests manually</span>
<svg class="ic" style="left:1074px;top:382px" width="16" height="12" viewBox="1074 382 16 12" ><path d="M1075.800 387.800h12M1083 382.900l5 4.900-5 4.900" fill="none" stroke="#4a5264" stroke-width="1.600" stroke-linecap="round" stroke-linejoin="round"/></svg>
<div id="sidebar" style="left:1192px;top:51px;width:49px;height:578px;background:#fff"></div>
<svg class="ic" style="left:1208px;top:61px" width="18" height="16" viewBox="1208 61 18 16" ><rect x="1210.1" y="61.4" width="2" height="2.60" rx=".5" fill="#566074"/><circle cx="1211.1" cy="67.7" r="1.95" fill="#566074"/><rect x="1210.1" y="70.6" width="2" height="5.70" rx=".5" fill="#566074"/><rect x="1216" y="61.4" width="2" height="6.10" rx=".5" fill="#566074"/><circle cx="1217" cy="70.9" r="1.95" fill="#566074"/><rect x="1216" y="74" width="2" height="2.30" rx=".5" fill="#566074"/><rect x="1222.1" y="61.4" width="2" height="2.00" rx=".5" fill="#566074"/><circle cx="1223.1" cy="66.8" r="1.95" fill="#566074"/><rect x="1222.1" y="69.8" width="2" height="6.50" rx=".5" fill="#566074"/></svg>
<span class="t" style="left:1205.49px;top:83.00px;color:#5f6b7c;font-size:8.8px;-webkit-text-stroke:.25px;transform:scaleX(0.9420)">Config</span>
<svg class="ic" style="left:1212px;top:108px" width="10" height="12" viewBox="1212 108 10 12" ><path d="M1213.400 109.700l7.200 4.300-7.200 4.300z" fill="#566074" stroke="#566074" stroke-width="1" stroke-linejoin="round"/></svg>
<span class="t" style="left:1202.18px;top:127.80px;color:#5f6b7c;font-size:8.8px;-webkit-text-stroke:.25px;transform:scaleX(0.9235)">Preview</span>
<div style="left:1202px;top:151px;width:29px;height:1px;background:#dfe2e7"></div>
<svg class="ic" style="left:1208px;top:167px" width="18" height="16" viewBox="1208 167 18 16" ><g fill="none" stroke="#566074" stroke-width="1.9"><path d="M1209.800 171.200l1.900 1.800 3.200-4.100" stroke-linecap="round" stroke-linejoin="round"/><path d="M1219.200 170.900h4.700M1219.200 178.900h4.700" stroke-linecap="round"/><rect x="1210.050" y="176.850" width="3.900" height="4.100" rx=".7"/></g></svg>
<span class="t" style="left:1200.72px;top:188.70px;color:#5f6b7c;font-size:8.8px;-webkit-text-stroke:.25px;transform:scaleX(0.9482)">Bulk test</span>
<div style="left:1197px;top:207px;width:40px;height:39.5px;background:#e1e3e8;border-radius:3px"></div>
<svg class="ic" style="left:1210px;top:212px" width="14" height="16" viewBox="1210 212 14 16" ><path d="M1213.300 213.600h7.200" stroke="#566074" stroke-width="1.500" stroke-linecap="round" fill="none"/><path d="M1214.800 214v4.800l-3.100 6.200a.9.900 0 0 0 .8 1.300h8.800a.9.900 0 0 0 .8-1.300l-3.100-6.200v-4.800" fill="none" stroke="#566074" stroke-width="1.900" stroke-linejoin="round"/><path d="M1213.300 222.200h7.200l2 4h-11.200z" fill="#566074"/></svg>
<span class="t" style="left:1207.88px;top:233.70px;color:#5f6b7c;font-size:8.8px;-webkit-text-stroke:.25px;transform:scaleX(0.8533)">Evals</span>
<div style="left:1202px;top:257px;width:29px;height:1px;background:#dfe2e7"></div>
<svg class="ic" style="left:1208px;top:272px" width="18" height="18" viewBox="1208 272 18 18" ><path d="M1222.600 284.700a6.800 6.800 0 1 1-4.900-10.500" fill="none" stroke="#566074" stroke-width="1.900" stroke-linecap="round"/><path d="M1215.400 278.900l4.200 2.400-4.200 2.400z" fill="#566074" stroke="#566074" stroke-width=".5" stroke-linejoin="round"/><path d="M1220.800 284.300h3.600v3.900" fill="none" stroke="#566074" stroke-width="1.800" stroke-linejoin="round" stroke-linecap="round"/><path d="M1219.400 273.500v1.800M1218.500 274.400h1.800M1222.400 275.800v1.600M1221.600 276.600h1.600" stroke="#566074" stroke-width=".8"/><rect x="1223.300" y="279.400" width="1.500" height="1.500" fill="#566074"/></svg>
<span class="t" style="left:1208.10px;top:294.70px;color:#5f6b7c;font-size:8.8px;-webkit-text-stroke:.25px;transform:scaleX(0.8591)">Runs</span>
<svg class="ic" style="left:1208px;top:317px" width="18" height="17" viewBox="1208 317 18 17" ><rect x="1216.100" y="318.400" width="1.900" height="14.900" rx=".6" fill="#566074"/><rect x="1208.900" y="321.200" width="5.900" height="3.800" rx="1.700" fill="#566074"/><rect x="1208.900" y="327.100" width="5.900" height="3.800" rx="1.700" fill="#566074"/><rect x="1219.500" y="321.800" width="4.900" height="2.600" rx="1.200" fill="none" stroke="#566074" stroke-width="1.200"/><rect x="1219.500" y="327.700" width="4.900" height="2.600" rx="1.200" fill="none" stroke="#566074" stroke-width="1.200"/></svg>
<span class="t" style="left:1201.24px;top:339.60px;color:#5f6b7c;font-size:8.8px;-webkit-text-stroke:.25px;transform:scaleX(0.9164)">Versions</span>
<div style="left:1202px;top:363px;width:29px;height:1px;background:#dfe2e7"></div>
<svg class="ic" style="left:1208px;top:378px" width="18" height="18" viewBox="1208 378 18 18" ><g fill="none" stroke="#566074" stroke-width="1.100"><circle cx="1211.300" cy="381.400" r="1.900"/><circle cx="1222.700" cy="381.400" r="1.900"/><circle cx="1211.300" cy="392.700" r="1.900"/><circle cx="1222.700" cy="392.700" r="1.900"/><path d="M1212.700 382.800l8.600 8.500M1221.300 382.800l-8.600 8.500" stroke-width="1.400"/></g><rect x="1215.600" y="385.600" width="2.900" height="2.900" fill="#566074"/></svg>
<span class="t" style="left:1205.57px;top:400.70px;color:#5f6b7c;font-size:8.8px;-webkit-text-stroke:.25px;transform:scaleX(0.8614)">Usage</span>
<svg class="ic" style="left:1229px;top:617px" width="12" height="12" viewBox="0 0 12 12" ><path d="M12 0v12H0A12 12 0 0 0 12 0z" fill="#0d0f12"/></svg>
</body>
</html>
